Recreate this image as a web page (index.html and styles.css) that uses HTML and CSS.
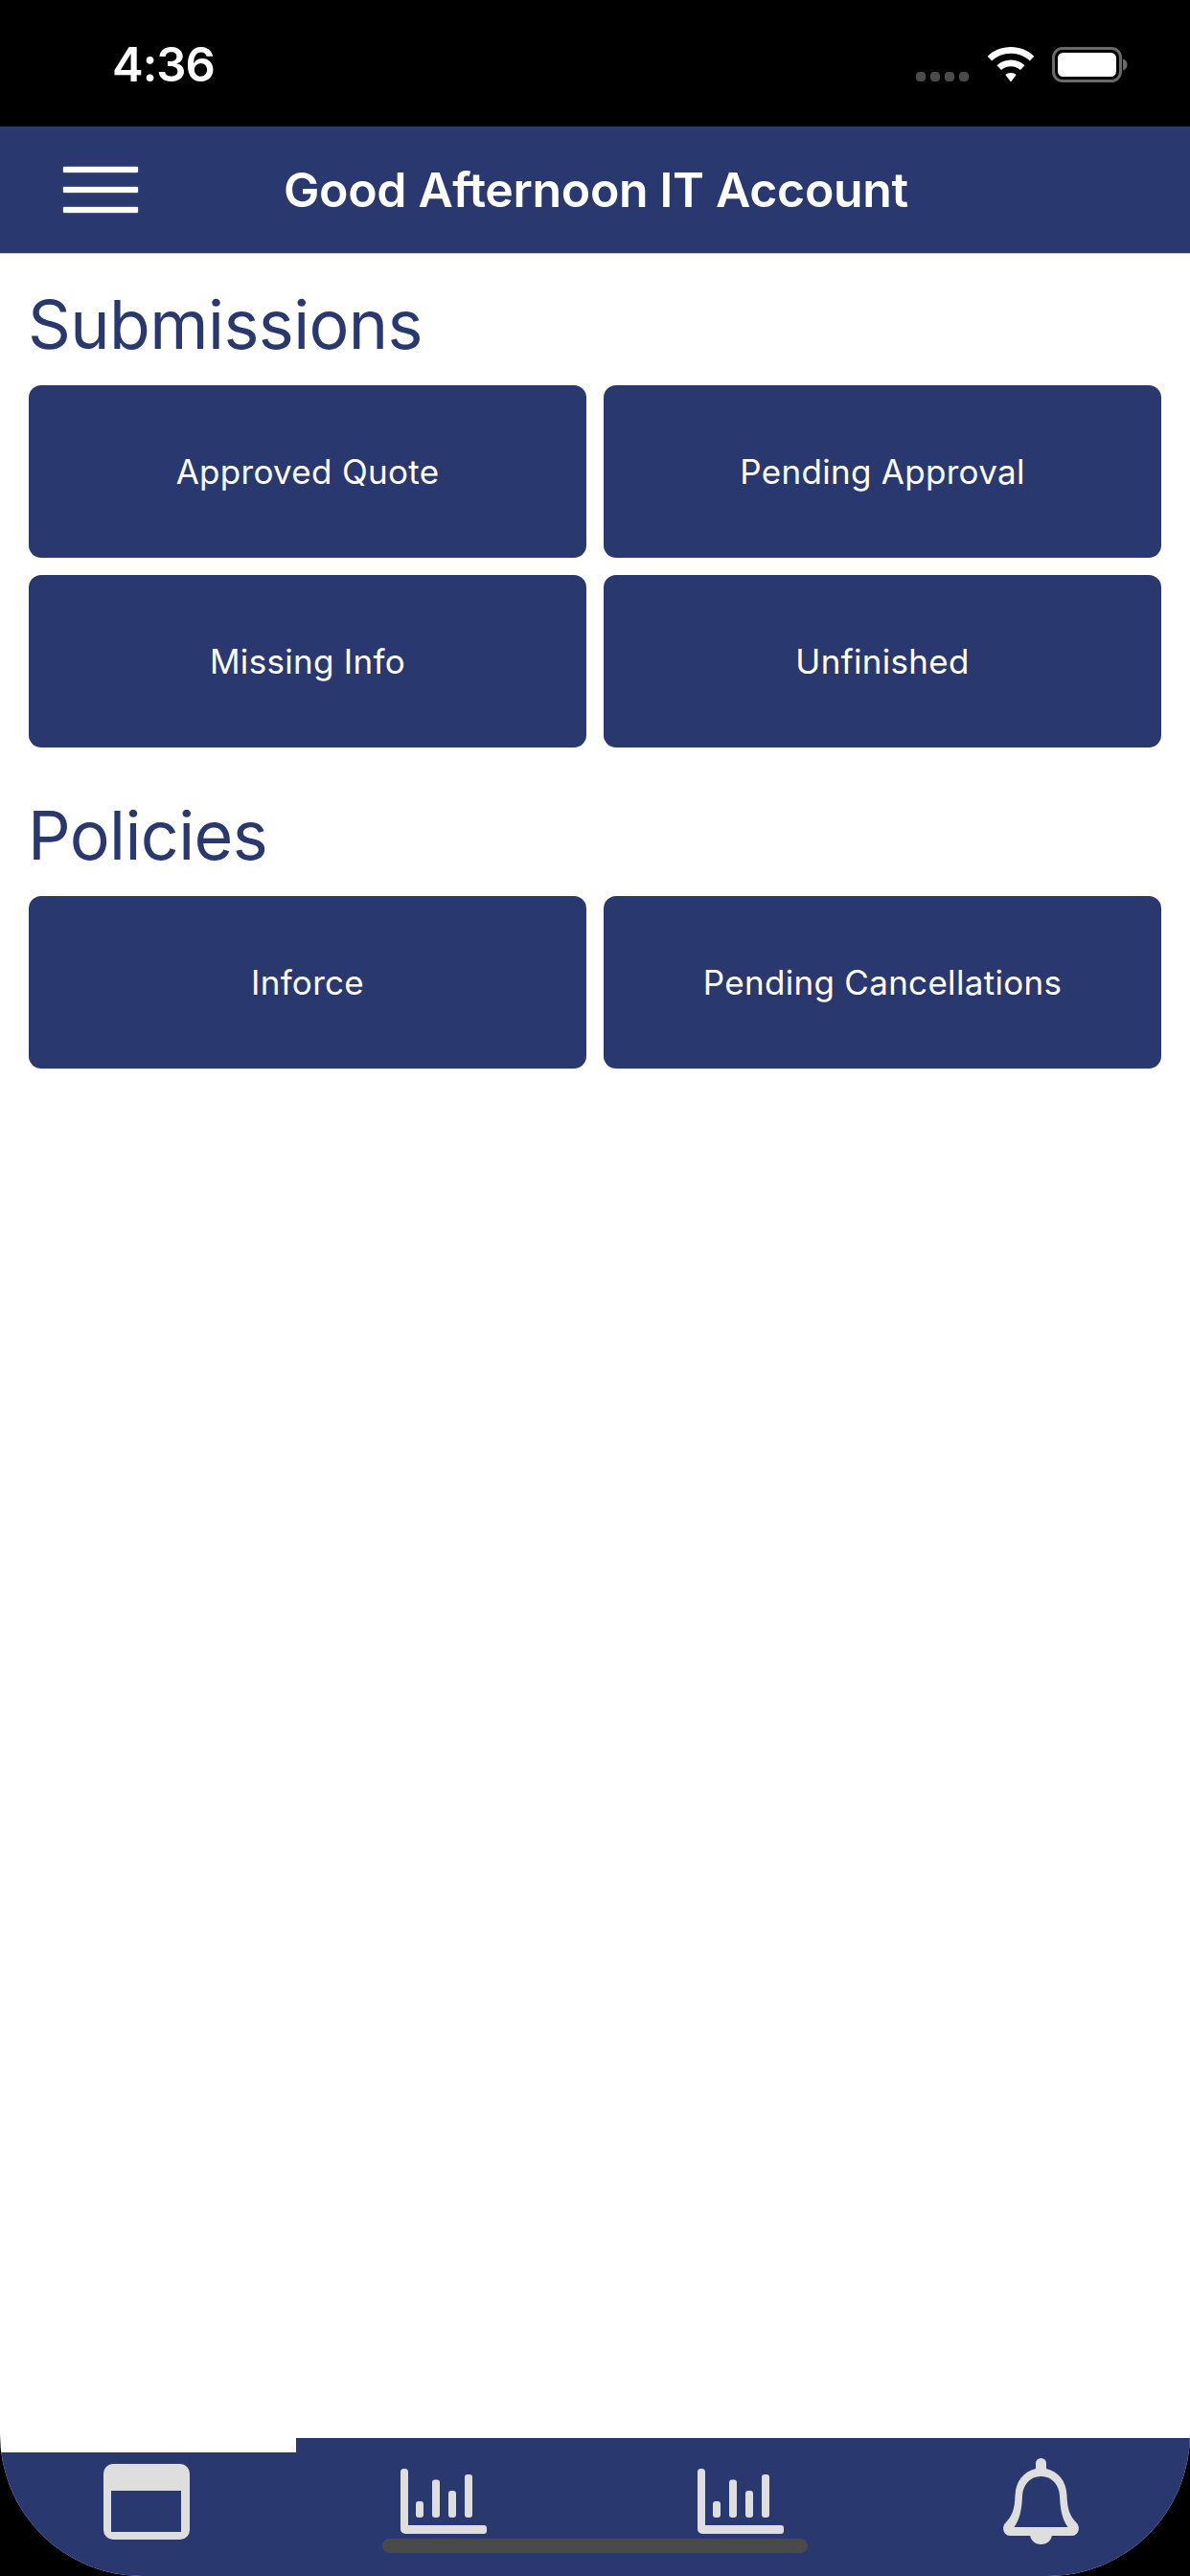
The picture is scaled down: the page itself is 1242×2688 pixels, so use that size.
FILE: index.html
```html
<!DOCTYPE html>
<html lang="en">
<head>
<meta charset="utf-8">
<title>Good Afternoon IT Account</title>
<link rel="stylesheet" href="styles.css">
</head>
<body>
<div class="screen">
  <div class="status">
    <span class="time">4:36</span>
    <div class="status-icons">
      <svg class="signal" width="56" height="12" viewBox="0 0 56 12"><g fill="#4b4b4b"><rect x="0" y="1" width="10" height="10" rx="4"/><rect x="15" y="1" width="10" height="10" rx="4"/><rect x="30" y="1" width="10" height="10" rx="4"/><rect x="45" y="1" width="10" height="10" rx="4"/></g></svg>
      <svg class="wifi" width="50" height="37" viewBox="0 0 50 37"><path fill="#fff" d="M25 0C34.500 0 43 3.600 49.300 9.700L44.800 14.500C39.700 9.700 32.700 6.700 25 6.700C17.300 6.700 10.300 9.700 5.200 14.500L.7 9.700C7 3.600 15.500 0 25 0ZM25 13.500C30.700 13.500 35.700 15.700 39.500 19.200L35 24C32.400 21.600 28.900 20.200 25 20.200C21.100 20.200 17.600 21.600 15 24L10.500 19.200C14.300 15.700 19.300 13.500 25 13.500ZM25 27C27.300 27 29.300 27.800 30.700 29.100L25 36.500L19.300 29.100C20.700 27.800 22.700 27 25 27Z"/></svg>
      <svg class="battery" width="79" height="37" viewBox="0 0 79 37"><rect x="1.500" y="1.500" width="70" height="34" rx="9.500" fill="none" stroke="#6a6a6a" stroke-width="3"/><rect x="6" y="6" width="61" height="25" rx="5.500" fill="#fff"/><path fill="#6a6a6a" d="M74 12.500C77 13.500 78.500 15.800 78.500 18.500C78.500 21.200 77 23.500 74 24.500Z"/></svg>
    </div>
  </div>
  <header class="topbar">
    <div class="burger"><span></span><span></span><span></span></div>
    <h1 class="greeting">Good Afternoon IT Account</h1>
  </header>
  <main class="content">
    <section class="group">
      <h2 class="group-title">Submissions</h2>
      <div class="cards">
        <a class="card">Approved Quote</a>
        <a class="card">Pending Approval</a>
        <a class="card">Missing Info</a>
        <a class="card">Unfinished</a>
      </div>
    </section>
    <section class="group">
      <h2 class="group-title">Policies</h2>
      <div class="cards">
        <a class="card">Inforce</a>
        <a class="card">Pending Cancellations</a>
      </div>
    </section>
  </main>
  <nav class="tabs">
    <div class="tab tab-short">
      <svg class="icon-window" width="90" height="79" viewBox="0 0 90 79"><path fill="#dedede" fill-rule="evenodd" d="M10 0H80A10 10 0 0 1 90 10V69A10 10 0 0 1 80 79H10A10 10 0 0 1 0 69V10A10 10 0 0 1 10 0ZM8 28V71H81V28Z"/></svg>
    </div>
    <div class="tab">
      <svg class="icon-chart" width="90" height="68" viewBox="0 0 90 68"><g fill="#dedede"><path d="M3.500 0H4.500A3.500 3.500 0 0 1 8 3.500V59H87A3 3 0 0 1 90 62V65A3 3 0 0 1 87 68H5A5 5 0 0 1 0 63V3.500A3.500 3.500 0 0 1 3.500 0Z"/><rect x="16" y="34" width="8" height="17" rx="3"/><rect x="33" y="11.500" width="8" height="39.500" rx="3"/><rect x="50" y="23" width="8" height="28" rx="3"/><rect x="67" y="6" width="8" height="45" rx="3"/></g></svg>
    </div>
    <div class="tab">
      <svg class="icon-chart" width="90" height="68" viewBox="0 0 90 68"><g fill="#dedede"><path d="M3.500 0H4.500A3.500 3.500 0 0 1 8 3.500V59H87A3 3 0 0 1 90 62V65A3 3 0 0 1 87 68H5A5 5 0 0 1 0 63V3.500A3.500 3.500 0 0 1 3.500 0Z"/><rect x="16" y="34" width="8" height="17" rx="3"/><rect x="33" y="11.500" width="8" height="39.500" rx="3"/><rect x="50" y="23" width="8" height="28" rx="3"/><rect x="67" y="6" width="8" height="45" rx="3"/></g></svg>
    </div>
    <div class="tab">
      <svg class="icon-bell" width="79" height="90" viewBox="0 0 79 90"><g fill="#dedede"><path fill-rule="evenodd" d="M39.500 0A5.500 5.500 0 0 1 45 5.500V11C57.500 14 66 24 66.500 39C67 53 69.500 60.500 76.500 67.500C81.500 72.500 78 81 72 81H7C1 81 -2.500 72.500 2.500 67.500C9.500 60.500 12 53 12.500 39C13 24 21.500 14 34 11V5.500A5.500 5.500 0 0 1 39.500 0ZM39.500 19C28 19 20.500 28 20 39.500C19.500 54 17 64.500 11.500 72H67.500C62 64.500 59.500 54 59 39.500C58.500 28 51 19 39.500 19Z"/><path d="M28 79H51C51 85.500 46 90 39.500 90C33 90 28 85.500 28 79Z"/></g></svg>
    </div>
    <div class="home-indicator"></div>
  </nav>
</div>
</body>
</html>
```

FILE: styles.css
```css
* { box-sizing: border-box; }
html, body { margin: 0; padding: 0; background: #000; }
body { width: 1242px; height: 2688px; font-family: Inter, "Liberation Sans", sans-serif; overflow: hidden; }
.screen {
  width: 1242px; height: 2688px; background: #fff;
  border-radius: 0 0 148px 148px;
  overflow: hidden; display: flex; flex-direction: column; position: relative;
}
.status {
  height: 132px; flex: none; background: #000; display: flex;
  justify-content: space-between; padding: 0 65px 0 117px; align-items: flex-start;
}
.time { color: #fff; font-size: 49px; font-weight: 600; line-height: 58px; margin-top: 39px; letter-spacing: -1px; }
.status-icons { display: flex; align-items: flex-end; margin-top: 49px; height: 37px; }
.signal { margin-right: 18px; }
.wifi { margin-right: 18px; }
.topbar {
  height: 133px; flex: none; background: #2a3870; display: flex; align-items: center;
  padding: 0 0 0 66px; border-bottom: 1px solid #c9ccd6;
}
.burger { width: 78px; height: 48px; display: flex; flex-direction: column; justify-content: space-between; margin-right: 152px; }
.burger span { display: block; height: 6px; background: #fff; border-radius: 1px; box-shadow: 0 0 2px rgba(255,255,255,.5); }
.greeting { margin: 0; color: #fff; font-size: 50px; font-weight: 600; letter-spacing: -.33px; line-height: 60px; }
.content { flex: 1; padding: 0 30px; display: flex; flex-direction: column; }
.group { margin-bottom: 18px; }
.group-title { margin: 0 0 0 -1px; font-weight: 400; font-size: 70px; letter-spacing: -.6px; color: #2a3870; line-height: 84px; padding: 32px 0 21px; }
.cards { display: grid; grid-template-columns: 582px 582px; gap: 18px; }
.card {
  height: 180px; background: #2a3870; border-radius: 13px; color: #fff;
  display: flex; align-items: center; justify-content: center; font-size: 35px; letter-spacing: .3px;
}
.tabs { height: 144px; flex: none; display: flex; align-items: flex-end; position: relative; }
.tab { height: 144px; width: 311px; background: #2a3870; flex: none; display: flex; align-items: flex-start; justify-content: center; }
.tab-short { height: 129px; width: 309px; }
.icon-window { margin-top: 12px; margin-left: -3px; }
.icon-chart { margin-top: 32px; }
.tab:nth-child(2) .icon-chart { margin-left: -3px; }
.tab:nth-child(3) .icon-chart { margin-left: -6px; }
.icon-bell { margin-top: 21px; margin-left: -1px; }
.home-indicator { position: absolute; left: 399px; top: 105px; width: 444px; height: 15px; border-radius: 8px; background: #4a4a4a; }
```
